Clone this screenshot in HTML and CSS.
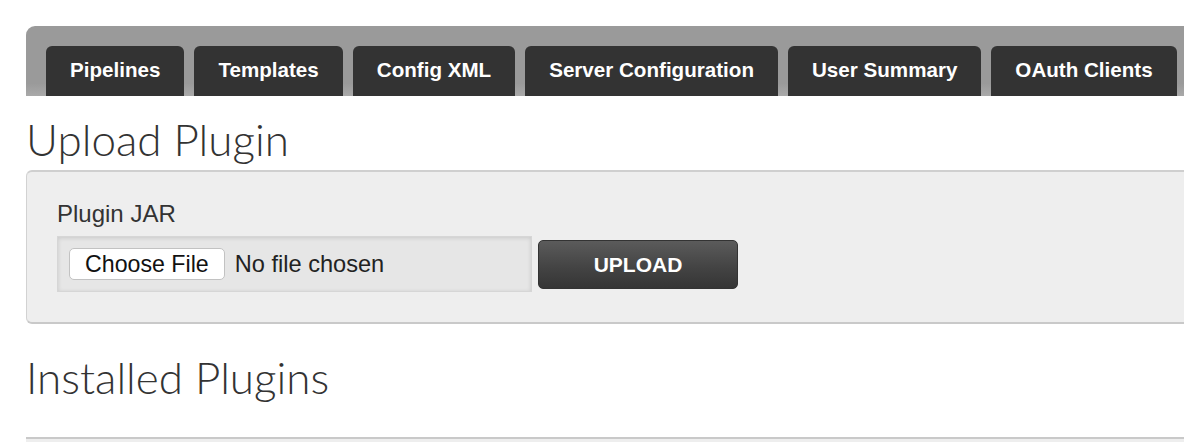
FILE: index.html
```html
<!DOCTYPE html>
<html lang="en">
<head>
<meta charset="utf-8">
<title>Plugins</title>
<link rel="stylesheet" href="styles.css">
</head>
<body>
<div class="page">
  <nav class="tabbar">
    <a class="tab" href="#">Pipelines</a>
    <a class="tab" href="#">Templates</a>
    <a class="tab" href="#">Config XML</a>
    <a class="tab" href="#">Server Configuration</a>
    <a class="tab" href="#">User Summary</a>
    <a class="tab" href="#">OAuth Clients</a>
  </nav>

  <h1 class="heading heading-upload">Upload Plugin</h1>

  <form class="panel">
    <div class="field-label">Plugin JAR</div>
    <div class="field-row">
      <div class="file-box">
        <span class="file-btn">Choose File</span>
        <span class="file-name">No file chosen</span>
      </div>
      <button type="button" class="upload-btn">UPLOAD</button>
    </div>
  </form>

  <h1 class="heading heading-installed">Installed Plugins</h1>

  <div class="plugin-list"></div>
</div>
</body>
</html>
```

FILE: styles.css
```css
html, body {
  margin: 0;
  padding: 0;
  background: #fff;
  overflow: hidden;
}

body {
  font-family: "Liberation Sans", Arial, sans-serif;
  color: #333;
}

.page {
  margin-left: 26px;
  padding-top: 26px;
  width: 1300px;
}

.tabbar {
  display: flex;
  gap: 10px;
  height: 70px;
  box-sizing: border-box;
  padding: 20px 20px 0;
  background: linear-gradient(to bottom, #9a9a9a 0, #9a9a9a 82%, #a9a9a9 100%);
  border-top-left-radius: 9px;
}

.tab {
  display: block;
  height: 50px;
  box-sizing: border-box;
  padding: 0 24px 2px;
  line-height: 48px;
  background: #333;
  color: #fff;
  font-size: 20.6px;
  font-weight: bold;
  text-decoration: none;
  border-radius: 6px 6px 0 0;
  white-space: nowrap;
}

.heading {
  font-family: "Lato", "Liberation Sans", sans-serif;
  font-weight: 300;
  font-size: 44px;
  line-height: 48px;
  color: #333;
  margin: 0;
}

.heading-upload {
  margin-top: 19px;
  margin-bottom: 7px;
}

.heading-installed {
  margin-top: 29px;
  margin-bottom: 0;
}

.panel {
  margin: 0;
  background: #eee;
  border: 1px solid #d2d2d2;
  border-top: 2px solid #cfcfcf;
  border-bottom: 2px solid #c9c9c9;
  border-radius: 6px;
  padding: 28px 30px 30px;
}

.field-label {
  font-size: 24px;
  line-height: 28px;
  color: #333;
  margin-bottom: 8px;
}

.field-row {
  display: flex;
  align-items: center;
  gap: 6px;
}

.file-box {
  display: flex;
  align-items: center;
  gap: 10px;
  width: 475px;
  height: 56px;
  box-sizing: border-box;
  padding-left: 11px;
  background: #e6e6e6;
  border: 1px solid #d6d6d6;
  box-shadow: inset 0 1px 4px rgba(0, 0, 0, 0.13);
}

.file-btn {
  display: block;
  height: 32px;
  box-sizing: border-box;
  padding: 0 15px;
  line-height: 30px;
  background: #fff;
  border: 1px solid #c2c2c2;
  border-radius: 5px;
  font-size: 23.2px;
  color: #111;
}

.file-name {
  font-size: 23.6px;
  color: #222;
}

.upload-btn {
  width: 200px;
  height: 49px;
  margin-top: 1px;
  background: linear-gradient(to bottom, #5b5b5b 0, #444 55%, #353535 100%);
  border: 1px solid #333;
  border-radius: 5px;
  color: #fff;
  font-family: "Liberation Sans", Arial, sans-serif;
  font-size: 21px;
  font-weight: bold;
  padding: 0;
}

.plugin-list {
  margin-top: 36px;
  height: 40px;
  background: #eee;
  border-top: 2px solid #c9c9c9;
}
```
